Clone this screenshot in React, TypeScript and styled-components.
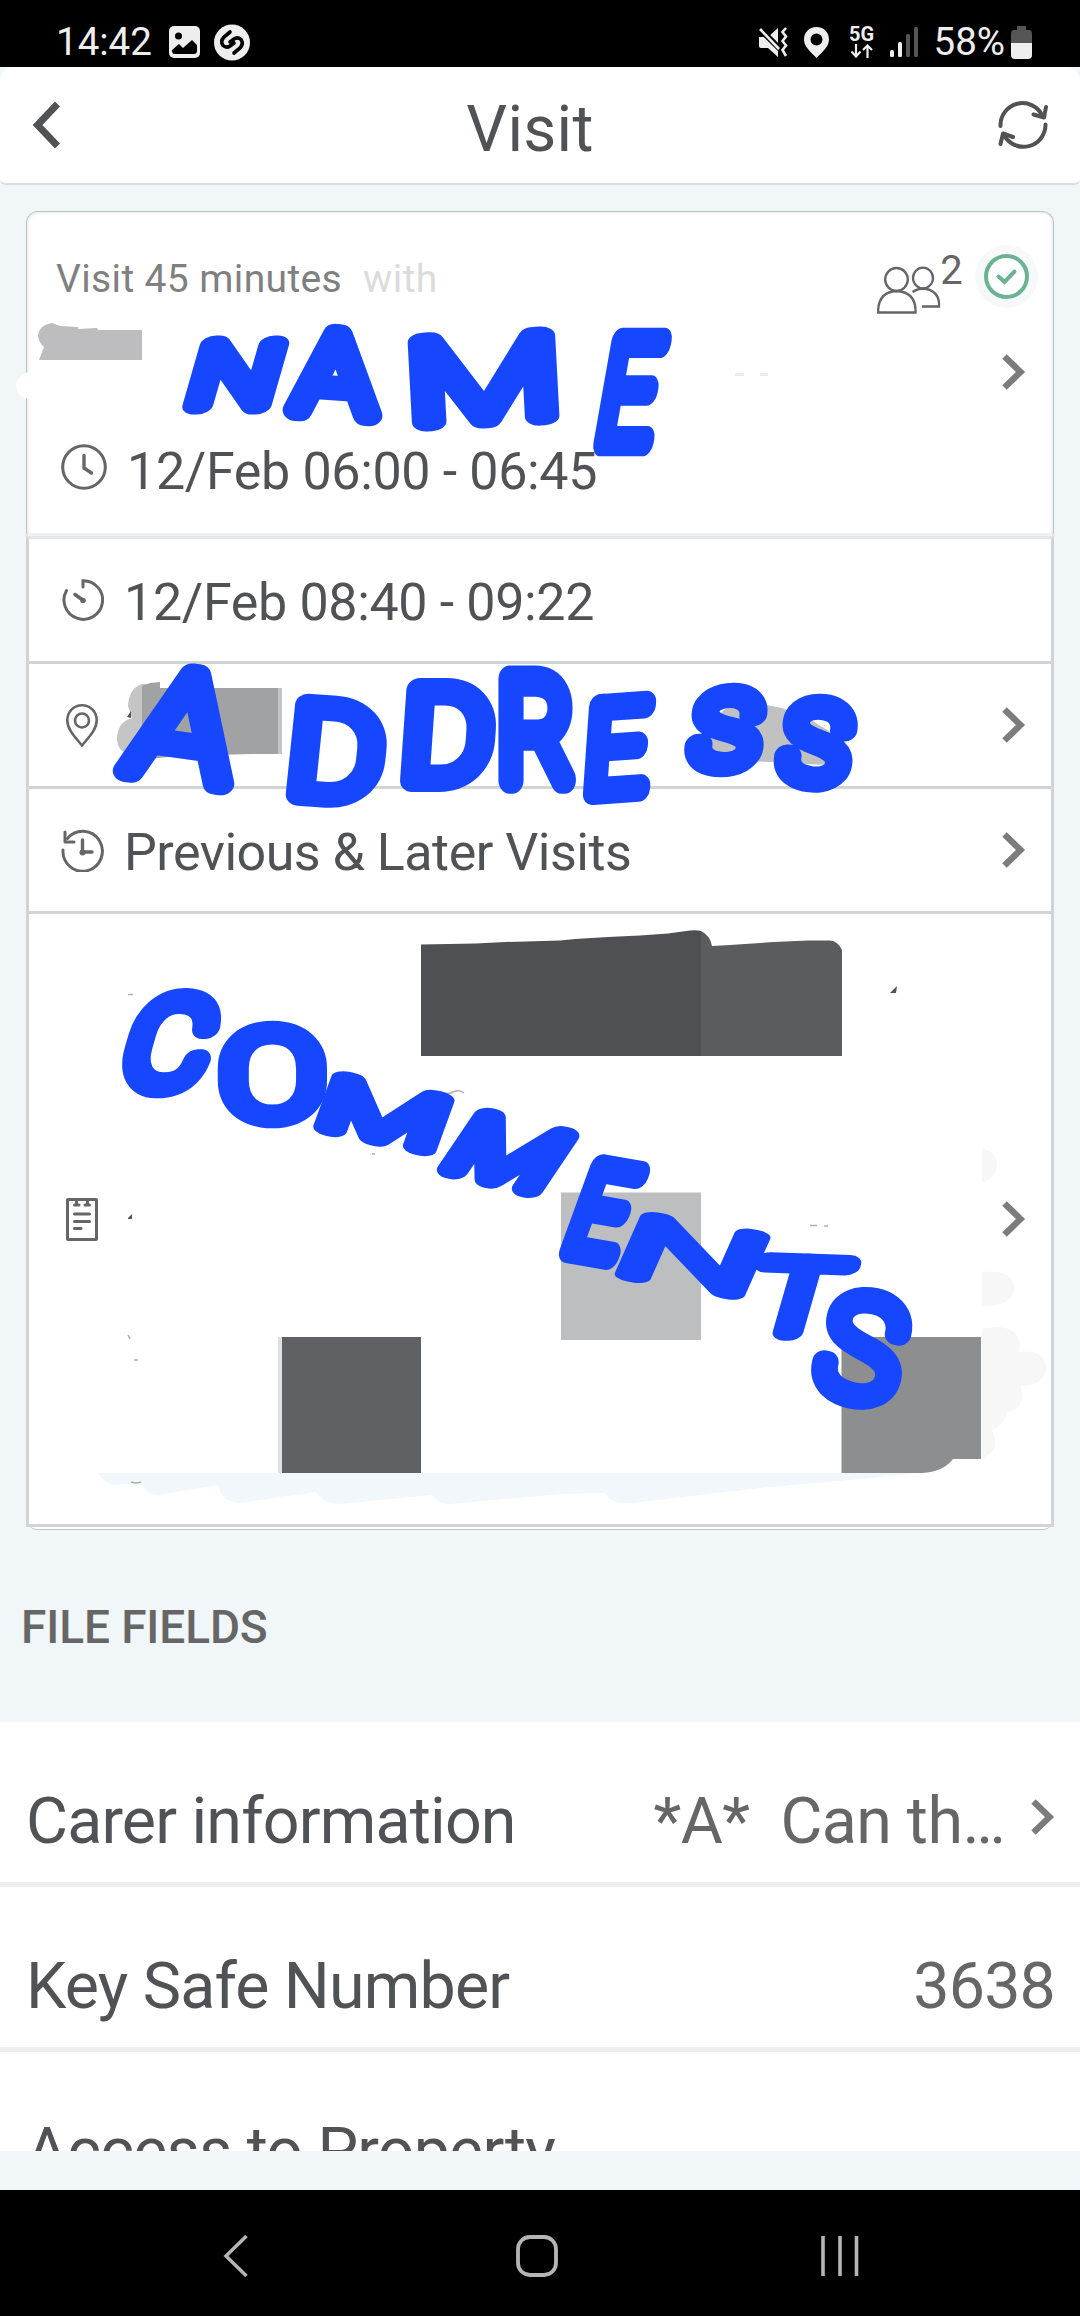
import React from "react";
import styled, { createGlobalStyle } from "styled-components";

const GlobalStyle = createGlobalStyle`
  * { box-sizing: border-box; }
  body { margin: 0; background: #f1f6f9; font-family: Roboto, "Noto Sans", sans-serif; }
  svg { display: block; flex: none; }
`;

const ink = "#505255";
const grey = "#666666";
const marker = "#1647ff";

const Screen = styled.div`
  display: flex;
  flex-direction: column;
  width: 1080px;
  height: 2316px;
  overflow: hidden;
  background: #f1f6f9;
`;

const StatusBar = styled.div`
  display: flex;
  align-items: center;
  justify-content: space-between;
  height: 67px;
  padding: 17px 48px 0 56px;
  background: #000;
  color: #eeeeee;
`;

const StatusGroup = styled.div<{ $gap: number }>`
  display: flex;
  align-items: center;
  gap: ${(p) => p.$gap}px;
`;

const StatusText = styled.span<{ $left?: number; $right?: number }>`
  font-size: 38.5px;
  line-height: 50px;
  margin-left: ${(p) => p.$left ?? 0}px;
  margin-right: ${(p) => p.$right ?? 0}px;
  white-space: nowrap;
`;

const Network = styled.div`
  display: flex;
  flex-direction: column;
  align-items: center;
  gap: 3px;
  width: 26px;
  margin-left: 5px;
  font-size: 20px;
  font-weight: 700;
  line-height: 14px;
`;

const Header = styled.header`
  display: grid;
  grid-template-columns: 80px 1fr 80px;
  align-items: center;
  height: 118px;
  padding: 0 32px;
  background: #fff;
  border-bottom: 2px solid #dadddf;
  border-radius: 14px 14px 6px 6px;
`;

const Title = styled.h1`
  margin: 0;
  padding: 10px 20px 0 0;
  text-align: center;
  font-size: 64px;
  font-weight: 400;
  line-height: 80px;
  letter-spacing: 0.3px;
  color: ${ink};
`;

const HeaderAction = styled.div<{ $end?: boolean }>`
  display: flex;
  justify-content: ${(p) => (p.$end ? "flex-end" : "flex-start")};
`;

const Card = styled.section`
  position: relative;
  display: flex;
  flex-direction: column;
  width: 1028px;
  height: 1319px;
  margin: 26px 26px 0;
  background: #fff;
  border-bottom: 1px solid #c0c5c8;
  border-radius: 12px;
`;

const Summary = styled.div`
  display: flex;
  flex-direction: column;
  height: 325px;
  padding: 37px 25px 0 29px;
  border: 1px solid #b9c0c4;
  border-bottom: 3px solid #f0f1f2;
  border-radius: 12px 12px 0 0;
  box-shadow: inset 2px 2px 0 #f2f3f3, inset -2px 0 0 #f2f3f3;
`;

const Meta = styled.div`
  display: flex;
  align-items: center;
  justify-content: space-between;
  height: 60px;
  font-size: 39px;
  line-height: 48px;
  letter-spacing: 0.37px;
  color: #808080;
`;

const With = styled.span`
  margin-left: 21px;
  color: #dcdcdc;
`;

const Badges = styled.div`
  display: flex;
  align-items: flex-start;
  height: 68px;
  margin-right: -10px;
  color: ${grey};
`;

const PeopleSlot = styled.div`
  padding-top: 21px;
`;

const Count = styled.span`
  margin: 1px 12px 0 -1px;
  font-size: 40px;
  line-height: 50px;
`;

const PersonLine = styled.div`
  display: flex;
  align-items: center;
  justify-content: flex-end;
  height: 125px;
  padding-right: 2px;
`;

const TimeLine = styled.div`
  display: flex;
  align-items: center;
  height: 74px;
  padding-left: 5px;
`;

const RowText = styled.span<{ $left: number; $top: number; $spacing: number }>`
  flex: 1;
  margin-left: ${(p) => p.$left}px;
  padding-top: ${(p) => p.$top}px;
  font-size: 52px;
  line-height: 64px;
  letter-spacing: ${(p) => p.$spacing}px;
  color: ${ink};
  white-space: nowrap;
`;

const ClockSlot = styled.div`
  padding-bottom: 8px;
`;

const Rows = styled.div`
  display: flex;
  flex-direction: column;
  height: 991px;
  border: 3px solid #d2d3d4;
  border-top-color: #e3e5e7;
`;

const Row = styled.div<{ $grow?: boolean }>`
  display: flex;
  align-items: center;
  justify-content: space-between;
  height: ${(p) => (p.$grow ? "auto" : "125px")};
  flex: ${(p) => (p.$grow ? "1" : "none")};
  padding: 0 25px 0 32px;
  border-bottom: ${(p) => (p.$grow ? "0" : "3px solid #d2d3d4")};
`;

const IconSlot = styled.div<{ $narrow?: boolean }>`
  display: flex;
  justify-content: center;
  width: ${(p) => (p.$narrow ? 41 : 43)}px;
`;

const Markup = styled.svg`
  position: absolute;
  left: -26px;
  top: 0;
  pointer-events: none;
`;

const GroupTitle = styled.h2`
  margin: 0;
  height: 192px;
  padding: 2px 0 0 21px;
  font-size: 46px;
  font-weight: 500;
  line-height: 191px;
  letter-spacing: -0.1px;
  color: ${grey};
`;

const FieldList = styled.div`
  height: 429px;
  overflow: hidden;
  background: #fff;
`;

const Field = styled.div`
  display: flex;
  align-items: center;
  height: 165px;
  padding: 38px 25px 0 26px;
  border-bottom: 5px solid #eeeeee;
  font-size: 64.5px;
  line-height: 80px;
  letter-spacing: -0.82px;
  color: ${ink};
`;

const FieldLabel = styled.span`
  flex: 1;
  white-space: nowrap;
`;

const FieldValue = styled.span<{ $spacing?: number }>`
  color: ${grey};
  letter-spacing: ${(p) => p.$spacing ?? -0.82}px;
  white-space: pre;
`;

const FieldArrow = styled.div`
  margin: 0 0 8px 26px;
`;

const NavBar = styled.nav`
  display: flex;
  align-items: center;
  height: 126px;
  margin-top: auto;
  padding: 6px 220px 0 223px;
  justify-content: space-between;
  background: #000;
`;

const HomeSlot = styled.div`
  padding-left: 4px;
`;

const Chevron = () => (
  <svg width="24" height="36" viewBox="0 0 24 36" fill="none" stroke="#7c7c7e" strokeWidth="6.4">
    <path d="M2.5 2.5 18.5 18 2.5 33.5" />
  </svg>
);

const PictureIcon = () => (
  <svg width="31" height="32" viewBox="0 0 31 32">
    <rect width="31" height="32" rx="5" fill="#eee" />
    <circle cx="9.5" cy="10" r="3.5" fill="#000" />
    <path d="M3 24 10 18 14 22 23 14 28 19V25Q28 28 25 28H6Q3 28 3 25Z" fill="#000" />
  </svg>
);

const ShazamIcon = () => (
  <svg width="36" height="37" viewBox="0 0 36 37" fill="none" stroke="#000" strokeWidth="3.6" strokeLinecap="round">
    <circle cx="18" cy="18.5" r="18" fill="#eee" stroke="none" />
    <path d="M16 8 10 13Q6 17.5 9 21.500 12.500 24.500 16 22L20 19" />
    <path d="M20 29 26 24Q30 19.500 27 15.500 23.500 12.500 20 15L16 18" />
  </svg>
);

const MuteIcon = () => (
  <svg width="31" height="31" viewBox="0 0 31 31" fill="#eee">
    <path d="M1 10H10L20 1V30L10 21H3Q1 21 1 19Z" />
    <path d="M0 0 22 22" stroke="#000" strokeWidth="6" />
    <path d="M2 2 21 22" stroke="#eee" strokeWidth="2.6" />
    <path d="M28 1 24.5 5 28 9.5 24.5 14 28 18.5 24.5 23 28 29" fill="none" stroke="#eee" strokeWidth="2.6" />
  </svg>
);

const PlaceIcon = () => (
  <svg width="25" height="31" viewBox="0 0 25 31">
    <path fillRule="evenodd" fill="#eee" d="M12.5 0C5 0 0 5.5 0 12.5 0 20 7 25 12.5 31 18 25 25 20 25 12.5 25 5.5 20 0 12.5 0ZM12.5 6.5a6 6 0 1 1 0 12 6 6 0 0 1 0-12Z" />
  </svg>
);

const DataIcon = () => (
  <svg width="24" height="14" viewBox="0 0 24 14" fill="none" stroke="#eee" strokeWidth="2.2">
    <path d="M6 0V12M1.5 7.5 6 12.5 10.5 7.5M17.5 14V1.5M13 6 17.5 1.5 22 6" />
  </svg>
);

const SignalIcon = () => (
  <svg width="29" height="31" viewBox="0 0 29 31" fill="#eee">
    <rect x="0" y="23" width="4" height="7" rx="1.5" />
    <rect x="8" y="15" width="4" height="15" rx="1.5" />
    <rect x="16" y="7" width="4" height="23" rx="1.5" fill="#555" />
    <rect x="24" y="0" width="4" height="30" rx="1.5" fill="#555" />
  </svg>
);

const BatteryIcon = () => (
  <svg width="21" height="33" viewBox="0 0 21 33">
    <path d="M6 0H15V4H18Q21 4 21 8V17H0V8Q0 4 3 4H6Z" fill="#555" />
    <path d="M0 17H21V29Q21 33 17 33H4Q0 33 0 29Z" fill="#eee" />
  </svg>
);

const BackIcon = () => (
  <svg width="28" height="48" viewBox="0 0 28 48" fill="none" stroke={ink} strokeWidth="7">
    <path d="M25.5 3 5.5 24 25.5 45" />
  </svg>
);

const RefreshIcon = () => (
  <svg width="50" height="50" viewBox="0 0 50 50" fill="none" stroke={ink} strokeWidth="4" strokeLinecap="round" strokeLinejoin="round">
    <path d="M2.5 26A22 22 0 0 1 44.5 16M47.5 24.5A22 22 0 0 1 6 35" />
    <path d="M35.5 14.5 46 17.5 48 7M2.5 44 5 33.5 15 37" />
  </svg>
);

const PeopleIcon = () => (
  <svg width="64" height="48" viewBox="0 0 64 48" fill="none" stroke="#666" strokeWidth="2.3">
    <ellipse cx="19.5" cy="13.5" rx="11.3" ry="11.5" />
    <path d="M1.2 46.5V43Q2.5 26 19.5 25 37.500 26 38.500 43V46.500Z" />
    <ellipse cx="46" cy="12" rx="10" ry="10.3" />
    <path d="M35.5 26Q41 22.500 46 22.500 61 24 62 37V40.500H45" />
  </svg>
);

const DoneIcon = () => (
  <svg width="63" height="63" viewBox="0 0 63 63" fill="none" stroke="#6cb393" strokeWidth="4">
    <circle cx="31.5" cy="31.5" r="31.5" fill="#f6f8fa" stroke="none" />
    <circle cx="31.5" cy="31.5" r="20.5" fill="#fff" />
    <path d="M23.5 31.5 29.5 37 39.5 26.5" strokeLinecap="round" />
  </svg>
);

const ClockIcon = () => (
  <svg width="46" height="46" viewBox="0 0 46 46" fill="none" stroke="#666" strokeWidth="3">
    <circle cx="23" cy="23" r="21.3" />
    <path d="M23 11.5V24L30.5 29" strokeLinecap="round" strokeWidth="3.4" />
  </svg>
);

const TimerIcon = () => (
  <svg width="42" height="42" viewBox="0 0 42 42" fill="none" stroke="#666" strokeWidth="3" strokeLinecap="round">
    <path d="M21 8V1.7A19.3 19.3 0 1 1 4.5 11.5" />
    <path d="M13 15.5 20 20.5" strokeWidth="3.5" />
    <circle cx="21" cy="21.5" r="2.8" fill="#666" stroke="none" />
  </svg>
);

const PinIcon = () => (
  <svg width="32" height="43" viewBox="0 0 32 43" fill="none" stroke="#666" strokeWidth="2.6">
    <path d="M16 1.3C7.500 1.300 1.300 8 1.300 16.500 1.300 26 10 34 16 41.500 22 34 30.700 26 30.700 16.500 30.700 8 24.500 1.300 16 1.300Z" />
    <circle cx="16" cy="16.5" r="7" />
  </svg>
);

const HistoryIcon = () => (
  <svg width="43" height="43" viewBox="0 0 43 43" fill="none" stroke="#666" strokeWidth="3" strokeLinecap="round" strokeLinejoin="round">
    <path d="M2 21A19.7 20 0 1 0 6.5 9.5" />
    <path d="M4 3V13H13" />
    <path d="M21.5 11V23H31" strokeWidth="3.4" />
    <circle cx="21.5" cy="23.5" r="3" fill="#666" stroke="none" />
  </svg>
);

const NoteIcon = () => (
  <svg width="32" height="43" viewBox="0 0 32 43" fill="none" stroke="#666" strokeWidth="3">
    <rect x="1.5" y="1.5" width="29" height="40" rx="0.500" />
    <path d="M8.500 7H13M19 7H23.500M10.500 3V7M21.500 3V7M8.500 16H23.500M8.500 23.500H23.500M8.500 30.500H15" strokeLinecap="round" />
  </svg>
);

/* Extents of each capital in font units, used to fit it to its box. */
const EXTENTS: Record<string, [number, number]> = {
  A: [28, 1309], N: [169, 1290], M: [169, 1619], E: [169, 1095], D: [169, 1227],
  R: [168, 1255], S: [93, 1119], C: [117, 1186], O: [118, 1292], T: [49, 1171],
};

/* letter, centre x, centre y, width, height, rotation, slant, pen width */
type Mark = [string, number, number, number, number, number, number, number];

const notes: Mark[][] = [
  [
    ["N", 236, 375, 66, 60, 0, -16, 29],
    ["A", 339, 374, 82, 78, 4, 0, 29],
    ["M", 485, 379, 126, 80, -3, 0, 30],
    ["E", 632, 392, 44, 102, 0, -10, 28],
  ],
  [
    ["A", 189, 727, 106, 104, 8, -4, 30],
    ["D", 338, 752, 74, 90, 4, -2, 29],
    ["D", 449, 735, 70, 90, 0, -4, 30],
    ["R", 538, 730, 60, 100, 0, 0, 30],
    ["E", 619, 748, 48, 86, -4, -8, 28],
    ["S", 726, 730, 54, 70, 0, -8, 29],
    ["S", 816, 743, 54, 74, 6, -4, 29],
  ],
  [
    ["C", 170, 1043, 66, 86, 2, -14, 29],
    ["O", 274, 1075, 88, 84, 0, 0, 29],
    ["M", 385, 1114, 102, 52, 12, -8, 29],
    ["M", 509, 1153, 86, 60, 14, -20, 29],
    ["E", 604, 1212, 42, 88, 10, -10, 28],
    ["N", 693, 1256, 108, 60, 10, -14, 29],
    ["T", 798, 1297, 80, 70, 2, -14, 28],
    ["S", 862, 1348, 68, 98, 12, -2, 28],
  ],
];

const Word = ({ marks }: { marks: Mark[] }) => (
  <g fill={marker} stroke={marker} strokeLinejoin="round" strokeLinecap="round" fontFamily="Roboto, sans-serif" fontWeight="100">
    {marks.map(([letter, cx, cy, w, h, turn, slant, pen], i) => {
      const size = h / 0.711;
      const [from, to] = EXTENTS[letter];
      const natural = ((to - from) / 2048) * size;
      const mid = ((to + from) / 4096) * size;
      return (
        <text
          key={i}
          fontSize={size}
          strokeWidth={pen - 5}
          vectorEffect="non-scaling-stroke"
          transform={`translate(${cx} ${cy}) rotate(${turn}) skewX(${slant}) scale(${w / natural} 1) translate(${-mid} ${h / 2})`}
        >
          {letter}
        </text>
      );
    })}
  </g>
);

const Annotations = () => (
  <Markup width="1080" height="1319" viewBox="0 211 1080 1319">
    <path d="M28 372Q16 376 16 386 17 397 28 399H34V372Z" fill="#fff" />
    <path d="M38 336Q39 325 52 323L60 326 78 327V329L97 328 98 330 142 330V360H39L44 347Q39 343 38 336Z" fill="#bdbdbf" />
    <g fill="#ececec"><path d="M735 373h9v3h-9zM760 373h8v3h-8z" /></g>

    <path d="M142 684Q129 688 128 706L132 718Q117 722 117 740 118 752 130 755H150V684Z" fill="#c5c5c5" />
    <path d="M142 686 150 683 160 682V688H278V754H252L177 756 150 759H142Z" fill="#a1a2a4" />
    <path d="M278 688h4v66h-4z" fill="#c4c4c4" />
    <path d="M127 717 131 711 131 718Z" fill={ink} />
    <path d="M701 730 730 705 755 703 782 708 811 720 832 733V765L800 764 775 762 701 760Z" fill="#c1c1c1" />

    <path d="M421 944.5 476 943.5 505 942 560 940.5 575 939 608 937 640 935.5 668 933.5 690 930.5Q697 930 701 931V1056H421Z" fill="#4e5053" />
    <path d="M701 931Q710 935 712 946L730 945 774 942 808 940.5H830Q838 941 842 950V1056H701Z" fill="#5b5c5d" />
    <path d="M561 1192.5h140v147.5h-140z" fill="#bcbec0" />
    <path d="M278 1337h4v136h-4z" fill="#e0e0e0" />
    <path d="M282 1337h139v136h-139z" fill="#606165" />
    <path d="M841.5 1337H981V1459H953Q943 1472 922 1473H841.5Z" fill="#8d8e90" />
    <g fill="#f7f7f7">
      <path d="M982 1148Q997 1152 997 1165 997 1177 982 1183Z" />
      <path d="M982 1272Q1014 1269 1014 1288 1014 1306 982 1306Z" />
      <path d="M982 1329Q1016 1321 1020 1344L1019 1352Q1045 1349 1046 1368 1044 1386 1021 1386L1022 1396Q1021 1411 1007 1412 1003 1428 991 1430 1000 1444 991 1453L982 1459Z" />
    </g>
    <path d="M98 1473H920L850 1480 760 1488 640 1502Q612 1507 605 1493L560 1494 450 1504Q438 1504 432 1495L340 1504Q322 1503 316 1492L240 1503Q221 1502 218 1485L158 1495Q145 1494 142 1483L112 1485Q103 1482 98 1473Z" fill="#f1f7fa" />
    <g fill={ink}>
      <path d="M890 993 897 986 896 993Z" />
      <path d="M128 1218 132 1214 132 1219 128 1219Z" />
    </g>
    <path d="M128 994.5h5M441 1092Q448 1095 453 1092 460 1089 464 1093M372 1154h3M128 1335l2 4M134 1360h4M131 1482Q136 1484 141 1482M810 1225.5h7M824 1226h4" fill="none" stroke="#b0b0b0" strokeWidth="1.6" />

    {notes.map((marks, i) => <Word key={i} marks={marks} />)}
  </Markup>
);

export default function App() {
  return (
    <>
      <GlobalStyle />
      <Screen>
        <StatusBar>
          <StatusGroup $gap={14}>
            <StatusText $right={3}>14:42</StatusText>
            <PictureIcon />
            <ShazamIcon />
          </StatusGroup>
          <StatusGroup $gap={15}>
            <MuteIcon />
            <PlaceIcon />
            <Network>
              5G
              <DataIcon />
            </Network>
            <SignalIcon />
            <StatusText $right={-9}>58%</StatusText>
            <BatteryIcon />
          </StatusGroup>
        </StatusBar>

        <Header>
          <HeaderAction><BackIcon /></HeaderAction>
          <Title>Visit</Title>
          <HeaderAction $end><RefreshIcon /></HeaderAction>
        </Header>

        <Card>
          <Summary>
            <Meta>
              <span>Visit 45 minutes<With>with</With></span>
              <Badges>
                <PeopleSlot><PeopleIcon /></PeopleSlot>
                <Count>2</Count>
                <DoneIcon />
              </Badges>
            </Meta>
            <PersonLine><Chevron /></PersonLine>
            <TimeLine>
              <ClockSlot><ClockIcon /></ClockSlot>
              <RowText $left={20} $top={2} $spacing={-0.34}>12/Feb 06:00 - 06:45</RowText>
            </TimeLine>
          </Summary>
          <Rows>
            <Row>
              <IconSlot><TimerIcon /></IconSlot>
              <RowText $left={20} $top={6} $spacing={-0.34}>12/Feb 08:40 - 09:22</RowText>
            </Row>
            <Row>
              <IconSlot $narrow><PinIcon /></IconSlot>
              <Chevron />
            </Row>
            <Row>
              <IconSlot><HistoryIcon /></IconSlot>
              <RowText $left={20} $top={6} $spacing={-0.5}>Previous &amp; Later Visits</RowText>
              <Chevron />
            </Row>
            <Row $grow>
              <IconSlot $narrow><NoteIcon /></IconSlot>
              <Chevron />
            </Row>
          </Rows>
          <Annotations />
        </Card>

        <GroupTitle>FILE FIELDS</GroupTitle>
        <FieldList>
          <Field>
            <FieldLabel>Carer information</FieldLabel>
            <FieldValue $spacing={-0.55}>{"*A*  Can th…"}</FieldValue>
            <FieldArrow><Chevron /></FieldArrow>
          </Field>
          <Field>
            <FieldLabel>Key Safe Number</FieldLabel>
            <FieldValue>3638</FieldValue>
          </Field>
          <Field>
            <FieldLabel>Access to Property</FieldLabel>
          </Field>
        </FieldList>

        <NavBar>
          <svg width="26" height="42" viewBox="0 0 26 42" fill="none" stroke="#b5b5b5" strokeWidth="3.5">
            <path d="M23.5 1 3 21 23.5 41" />
          </svg>
          <HomeSlot>
            <svg width="42" height="42" viewBox="0 0 42 42" fill="none" stroke="#b5b5b5" strokeWidth="3.8">
              <rect x="2" y="2" width="38" height="38" rx="12" />
            </svg>
          </HomeSlot>
          <svg width="40" height="42" viewBox="0 0 40 42" stroke="#b5b5b5" strokeWidth="3.6">
            <path d="M3 1V41M20 1V41M36.5 1V41" />
          </svg>
        </NavBar>
      </Screen>
    </>
  );
}
